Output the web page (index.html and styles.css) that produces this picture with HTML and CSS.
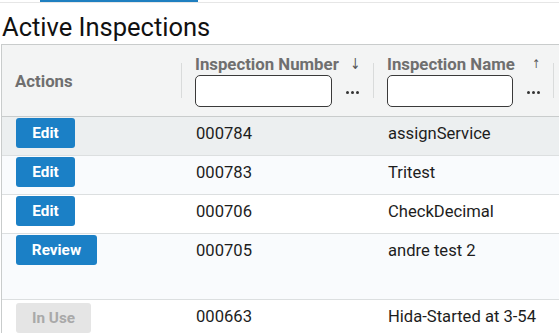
FILE: index.html
```html
<!DOCTYPE html>
<html>
<head>
<meta charset="utf-8">
<link rel="stylesheet" href="styles.css">
</head>
<body>
<div class="tabs"><div class="tab-active"></div></div>
<h1 class="title">Active Inspections</h1>
<div class="grid">
  <div class="row head">
    <div class="cell c1"><span class="hlabel">Actions</span></div>
    <div class="cell c2">
      <div class="sep"></div>
      <div class="hcontent">
        <div class="htitle"><span class="hlabel">Inspection Number</span><span class="sort">&#8595;</span></div>
        <div class="filter"><input class="finput finput-num" type="text"><span class="dots"><i></i><i></i><i></i></span></div>
      </div>
    </div>
    <div class="cell c3">
      <div class="sep"></div>
      <div class="hcontent">
        <div class="htitle"><span class="hlabel">Inspection Name</span><span class="sort sort-up">&#8593;</span></div>
        <div class="filter"><input class="finput finput-name" type="text"><span class="dots"><i></i><i></i><i></i></span></div>
      </div>
    </div>
    <div class="cell c4"><div class="sep"></div></div>
  </div>
  <div class="row body hover">
    <div class="cell c1"><button class="btn">Edit</button></div>
    <div class="cell c2 txt">000784</div>
    <div class="cell c3 txt">assignService</div>
    <div class="cell c4"></div>
  </div>
  <div class="row body alt">
    <div class="cell c1"><button class="btn">Edit</button></div>
    <div class="cell c2 txt">000783</div>
    <div class="cell c3 txt">Tritest</div>
    <div class="cell c4"></div>
  </div>
  <div class="row body">
    <div class="cell c1"><button class="btn">Edit</button></div>
    <div class="cell c2 txt">000706</div>
    <div class="cell c3 txt">CheckDecimal</div>
    <div class="cell c4"></div>
  </div>
  <div class="row body alt tall">
    <div class="cell c1"><button class="btn btn-review">Review</button></div>
    <div class="cell c2 txt">000705</div>
    <div class="cell c3 txt">andre test 2</div>
    <div class="cell c4"></div>
  </div>
  <div class="row body">
    <div class="cell c1"><button class="btn btn-disabled">In Use</button></div>
    <div class="cell c2 txt">000663</div>
    <div class="cell c3 txt">Hida-Started at 3-54</div>
    <div class="cell c4"></div>
  </div>
</div>
</body>
</html>
```
FILE: styles.css
```css
html, body {
  margin: 0;
  padding: 0;
  background: #ffffff;
  overflow: hidden;
  width: 559px;
  height: 333px;
  font-family: Roboto, "Noto Sans", sans-serif;
  color: #1a1a1a;
}
.tabs {
  height: 2px;
  border-bottom: 1px solid #e6e6e6;
}
.tab-active {
  margin-left: 40px;
  width: 158px;
  height: 2px;
  background: #1f7fc0;
}
.title {
  margin: 10px 0 0 2px;
  font-size: 25.5px;
  font-weight: 400;
  line-height: 28px;
  height: 31px;
  color: #111;
}
.grid {
  margin-left: 1px;
  width: 700px;
  border-left: 1px solid #c9cccc;
  border-top: 1px solid #c9cccc;
}
.row {
  display: grid;
  grid-template-columns: 179px 192px 180px 1fr;
  border-bottom: 1px solid #dcdfe0;
}
.row.head {
  height: 71px;
  background: #f3f4f4;
  border-bottom: 1px solid #c9cccc;
}
.head .cell {
  display: flex;
  align-items: center;
}
.head .c1 {
  padding-left: 13px;
}
.hlabel {
  font-weight: 700;
  font-size: 16.8px;
  color: #6f6f6f;
  line-height: 18px;
}
.sep {
  width: 1px;
  height: 35px;
  background: #d9dbdb;
  flex: none;
}
.hcontent {
  display: flex;
  flex-direction: column;
  padding-left: 13px;
  flex: 1;
  margin-top: 0;
}
.htitle {
  display: flex;
  align-items: center;
  justify-content: space-between;
  height: 20px;
  padding-right: 11px;
}
.sort {
  font-size: 15px;
  color: #555;
  font-family: "DejaVu Sans", sans-serif;
  transform: scaleX(0.8);
}
.sort-up {
  font-size: 12px;
  margin-right: 1px;
}
.filter {
  display: flex;
  align-items: center;
  margin-top: 1px;
}
.finput {
  box-sizing: border-box;
  height: 32px;
  border: 1px solid #3a3a3a;
  border-radius: 5px;
  background: #fff;
  padding: 0;
  margin: 0;
}
.finput-num { width: 137px; }
.finput-name { width: 126px; }
.dots {
  display: flex;
  gap: 2px;
  margin-left: 14px;
  margin-top: 2px;
}
.dots i {
  width: 3px;
  height: 3px;
  border-radius: 50%;
  background: #333;
}
.row.body {
  height: 38px;
  background: #fff;
}
.row.body.hover { background: #eceff0; }
.row.body.alt { background: #f9fbfd; }
.row.body.tall { height: 65px; }
.body .c1 {
  padding: 1px 0 0 14px;
}
.txt {
  padding: 7px 0 0 15px;
  font-size: 16.6px;
  line-height: 20px;
  color: #1d1d1d;
}
.btn {
  font-family: Roboto, "Noto Sans", sans-serif;
  height: 30px;
  width: 59px;
  border: none;
  border-radius: 3px;
  background: #1b80c6;
  color: #fff;
  font-size: 15.3px;
  font-weight: 700;
  padding: 0;
  cursor: pointer;
}
.btn-review { width: 81px; }
.btn-disabled {
  width: 75px;
  background: #e5e5e5;
  color: #a9a9a9;
  margin-top: 2px;
}
```
